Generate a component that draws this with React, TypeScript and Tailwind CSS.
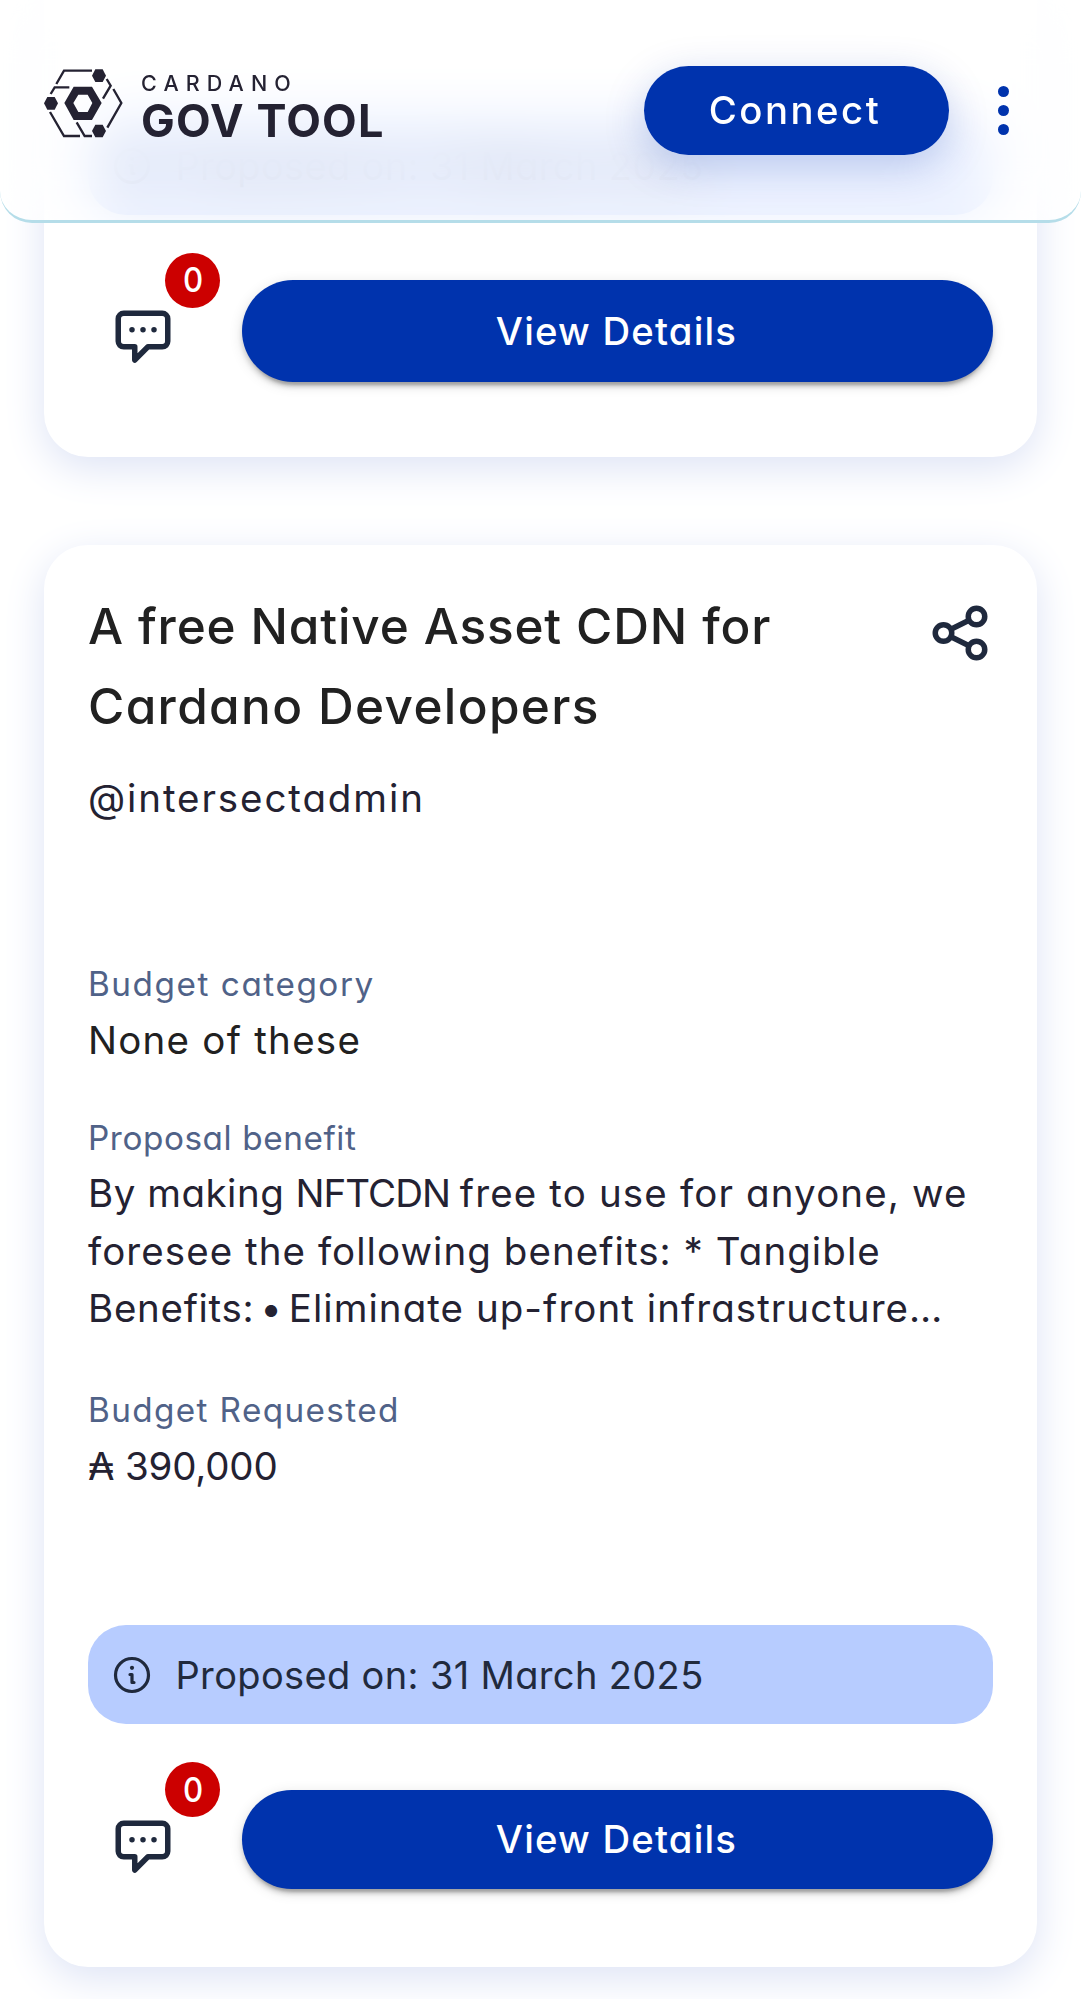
function Logo() {
  return (
    <svg viewBox="24 24 240 210" className="h-[70px] w-[80px] shrink-0" aria-hidden="true">
      <g fill="none" stroke="#242232" strokeWidth="7">
        <path d="M61 72 84 32H168" />
        <path d="M212 57 224 77 201 116" />
        <path d="M44 102 56 82H100" />
        <path d="M42 156 84 228H132" />
        <path d="M122 187 146 228H168" />
        <path d="M214 203 256 129 232 87" />
      </g>
      <g fill="#242232">
        <path d="M168 47 178 28H200L210 47 200 66H178Z" />
        <path d="M24 130 34 111H56L66 130 56 149H34Z" />
        <path d="M168 213 178 194H200L210 213 200 232H178Z" />
        <path
          fillRule="evenodd"
          d="M85 129 113 80H168L197 129 168 180H113ZM112 129 127 156H155L169 129 155 104H127Z"
        />
      </g>
    </svg>
  );
}

function ShareIcon() {
  return (
    <svg
      viewBox="0 0 24 24"
      className="h-[66px] w-[66px]"
      fill="none"
      stroke="#1f293d"
      strokeWidth="2"
      aria-hidden="true"
    >
      <circle cx="18" cy="6" r="3" />
      <circle cx="6" cy="12" r="3" />
      <circle cx="18" cy="18" r="3" />
      <path d="M8.7 10.65 15.3 7.35M8.7 13.35 15.3 16.65" />
    </svg>
  );
}

function CommentIcon() {
  return (
    <svg viewBox="0 0 24 24" className="h-[66px] w-[66px]" fill="none" aria-hidden="true">
      <path
        d="M5 3H19A2 2 0 0 1 21 5V13.2A2 2 0 0 1 19 15.2H13.8L9 20V15.2H5A2 2 0 0 1 3 13.2V5A2 2 0 0 1 5 3Z"
        stroke="#1f293d"
        strokeWidth="2"
        strokeLinejoin="round"
      />
      <g fill="#1f293d">
        <circle cx="8" cy="9" r="1" />
        <circle cx="12" cy="9" r="1" />
        <circle cx="16" cy="9" r="1" />
      </g>
    </svg>
  );
}

function InfoIcon() {
  return (
    <svg
      viewBox="0 0 44 44"
      className="h-[44px] w-[44px] shrink-0"
      fill="none"
      stroke="#1f293d"
      strokeWidth="3.2"
      strokeLinecap="round"
      strokeLinejoin="round"
      aria-hidden="true"
    >
      <circle cx="22" cy="22" r="16.5" />
      <path d="M20 21.5H22V29.5H24" />
      <circle cx="22" cy="14.8" r="2.1" fill="#1f293d" stroke="none" />
    </svg>
  );
}

function ProposedOn({ date }: { date: string }) {
  return (
    <div className="flex h-[99px] items-center rounded-[38px] bg-[#b7ccff] pl-[22px] text-[38px] text-[#212a3d]">
      <InfoIcon />
      <span className="ml-[21.5px] mt-px whitespace-nowrap leading-[58px] tracking-[0.35px]">
        Proposed on: {date}
      </span>
    </div>
  );
}

function Actions({ comments, buttonClass }: { comments: number; buttonClass: string }) {
  return (
    <div className="flex items-start">
      <button className="relative mt-[25px] flex w-[154px] pl-[22px]" aria-label="Comments">
        <CommentIcon />
        <span className="absolute -top-[52.5px] left-[77px] flex h-[55px] w-[55px] items-center justify-center rounded-full bg-[#cc0000] text-[34px] font-medium leading-none text-white">
          <span className="inline-block scale-x-[0.92]">{comments}</span>
        </span>
      </button>
      <button
        className={
          "flex-1 rounded-full bg-[#0033ad] pr-[2px] text-[38.3px] font-medium tracking-[1.2px] text-white shadow-[0_8px_3px_-5px_rgba(0,0,0,0.2),0_5px_5px_rgba(0,0,0,0.14),0_3px_14px_rgba(0,0,0,0.12)] " +
          buttonClass
        }
      >
        View Details
      </button>
    </div>
  );
}

const label = "text-[33.3px] leading-[50px] text-[#506288] whitespace-nowrap";
const value = "text-[38.5px] leading-[58px] whitespace-nowrap";

function Header() {
  return (
    <header className="absolute inset-x-0 top-0 z-10 h-[223px]">
      <div className="absolute inset-0 rounded-b-[32px] opacity-[0.985] backdrop-blur-[27px]" />
      <div className="relative flex h-full items-start rounded-b-[32px] border-b-[3px] border-[#b5dde9] bg-white/70 pl-[44px] pt-[66px]">
        <div className="flex pt-[2px]">
          <Logo />
          <div className="ml-[17px] whitespace-nowrap text-[#242232]">
            <div className="mt-[2px] text-[21.5px] font-medium leading-[26px] tracking-[7.1px]">
              CARDANO
            </div>
            <div className="mt-[1px] text-[45px] font-[650] leading-[48px] tracking-[1.15px]">
              GOV TOOL
            </div>
          </div>
        </div>
        <button className="ml-auto h-[88.5px] w-[305px] rounded-full bg-[#0033ad] pr-[2px] text-[38.3px] font-medium tracking-[2.5px] text-white shadow-[0_11px_41px_rgba(0,51,173,0.22)]">
          Connect
        </button>
        <button className="ml-[49.5px] mr-[72px] mt-[19.5px] flex flex-col gap-[8.2px]" aria-label="Menu">
          <span className="h-[11px] w-[11px] rounded-full bg-[#0033ad]" />
          <span className="h-[11px] w-[11px] rounded-full bg-[#0033ad]" />
          <span className="h-[11px] w-[11px] rounded-full bg-[#0033ad]" />
        </button>
      </div>
    </header>
  );
}

export default function App() {
  return (
    <div className="relative h-[1999px] overflow-hidden bg-white font-['Inter',sans-serif] [font-feature-settings:'cv11']">
      <Header />
      <main className="flex flex-col gap-[88px] px-[44px]">
        <article className="h-[457px] rounded-b-[44px] bg-white px-[44px] pt-[116px] shadow-[0_11px_41px_#dde3f5]">
          <ProposedOn date="31 March 2025" />
          <div className="mt-[65.3px]">
            <Actions comments={0} buttonClass="h-[102px]" />
          </div>
        </article>

        <article className="flex h-[1421.5px] flex-col rounded-[44px] bg-white px-[44px] pt-[41px] shadow-[0_11px_41px_#dde3f5]">
          <div className="flex items-start justify-between">
            <h2 className="whitespace-nowrap text-[49.5px] font-medium leading-[80px] text-[#212121]">
              <span className="block tracking-[0.85px]">A free Native Asset CDN for</span>
              <span className="block tracking-[1.35px]">Cardano Developers</span>
            </h2>
            <button className="mt-[14px]" aria-label="Share">
              <ShareIcon />
            </button>
          </div>
          <p className="mt-[23px] whitespace-nowrap text-[38.5px] leading-[58px] tracking-[1.9px] text-[#242232]">
            @intersectadmin
          </p>

          <div className="mt-[132px]">
            <p className={label + " tracking-[1.55px]"}>Budget category</p>
            <p className={value + " mt-[2px] tracking-[1.25px] text-[#212121]"}>None of these</p>
          </div>

          <div className="mt-[44px]">
            <p className={label + " tracking-[0.58px]"}>Proposal benefit</p>
            <p className="mt-[2px] whitespace-nowrap text-[38.5px] leading-[57.5px] text-[#242232]">
              <span className="block tracking-[1.15px]">
                <span className="tracking-[0.5px]">By making </span>
                <span className="tracking-[-1px]">NFTCDN </span>free to use for anyone, we
              </span>
              <span className="block tracking-[1.06px]">foresee the following benefits: * Tangible</span>
              <span className="block tracking-[1.05px]">
                <span className="tracking-[0.7px] [word-spacing:-5.5px]">Benefits: • </span>
                Eliminate up-front infrastructure…
              </span>
            </p>
          </div>

          <div className="mt-[47px]">
            <p className={label + " tracking-[1.38px]"}>Budget Requested</p>
            <p className={value + " mt-[2px] tracking-[-0.2px] text-[#242232]"}>₳ 390,000</p>
          </div>

          <div className="mt-[130.8px]">
            <ProposedOn date="31 March 2025" />
          </div>
          <div className="mt-[65.5px]">
            <Actions comments={0} buttonClass="h-[99.5px]" />
          </div>
        </article>
      </main>
    </div>
  );
}
